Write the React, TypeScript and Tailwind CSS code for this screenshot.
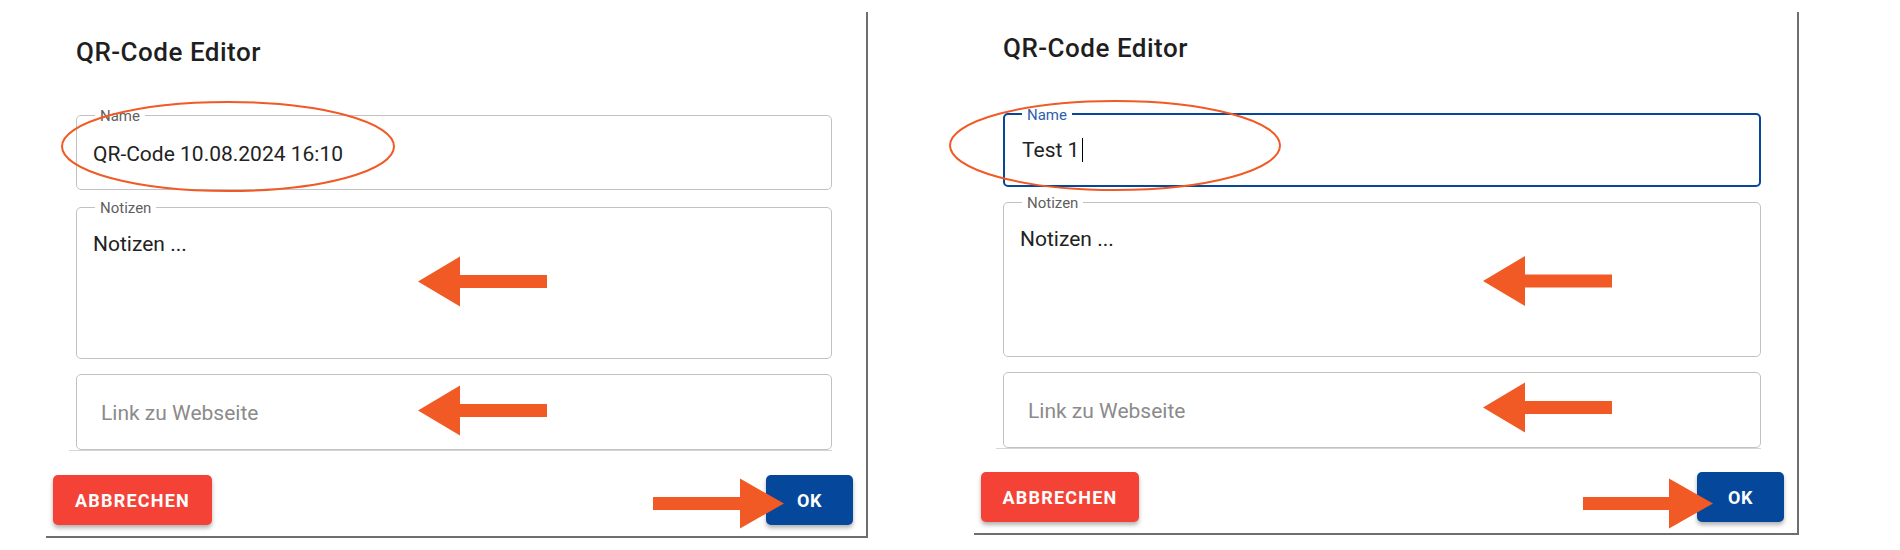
import type { ReactNode } from "react"

const ORANGE = "#f15a24"

type FieldProps = {
  label?: string
  focused?: boolean
  className: string
  children: ReactNode
}

// outlined text field, label sits in a notch on the top border
function Field({ label, focused, className, children }: FieldProps) {
  return (
    <div
      className={
        "relative rounded-[5px] bg-white " +
        (focused ? "border-2 border-[#06479c] " : "border border-[#c2c2c2] ") +
        className
      }
    >
      {label && (
        <span
          className={
            "absolute -top-[8px] bg-white px-[5px] text-[15px] leading-[16px] " +
            (focused ? "left-[17px] text-[#2d5fae]" : "left-[18px] text-[#5f5f5f]")
          }
        >
          {label}
        </span>
      )}
      {children}
    </div>
  )
}

type PanelProps = {
  right?: boolean
}

function EditorPanel({ right }: PanelProps) {
  return (
    <div
      className={
        "flex flex-col border-r-2 border-b-2 border-[#6e6e6e] bg-white " +
        (right ? "w-[825px] h-[523px]" : "w-[822px] h-[526px]")
      }
    >
      <div className={right ? "pl-[29px] pr-[36px] pt-[20px]" : "pl-[30px] pr-[34px] pt-[24px]"}>
        <h2 className="text-[26px] leading-[32px] font-medium tracking-[0.5px] text-[#1f1f1f]">QR-Code Editor</h2>

        {right ? (
          <Field label="Name" focused className="mt-[49px] h-[74px] pl-[17px] pt-[23px]">
            <div className="flex items-center text-[21px] leading-[24px] text-[#222]">
              Test 1
              <span className="ml-[3px] inline-block h-[24px] w-px bg-black" />
            </div>
          </Field>
        ) : (
          <Field label="Name" className="mt-[47px] h-[75px] pl-[16px] pt-[26px]">
            <div className="text-[21px] leading-[24px] text-[#222]">QR-Code 10.08.2024 16:10</div>
          </Field>
        )}

        <Field
          label="Notizen"
          className={(right ? "mt-[15px] h-[155px]" : "mt-[17px] h-[152px]") + " pl-[16px] pt-[24px]"}
        >
          <div className="text-[21px] leading-[24px] text-[#222]">Notizen ...</div>
        </Field>

        <Field className="mt-[15px] h-[76px] pl-[24px] pt-[26px]">
          <div className="text-[21px] leading-[24px] text-[#8b8b8b]">Link zu Webseite</div>
        </Field>
        <div className="-ml-[7px] h-px bg-[#d6d6d6]" />
      </div>

      <div className={"flex items-start justify-between pl-[7px] pr-[13px] " + (right ? "mt-[23px]" : "mt-[24px]")}>
        <button
          className={
            "flex h-[50px] items-center justify-center rounded-[5px] bg-[#f44336] text-[18px] font-bold tracking-[1.2px] text-white shadow-[0_3px_4px_rgba(0,0,0,0.3)] " +
            (right ? "w-[158px]" : "w-[159px]")
          }
        >
          ABBRECHEN
        </button>
        <button className="flex h-[50px] w-[87px] items-center justify-center rounded-[5px] bg-[#04479b] text-[18px] font-bold tracking-[0.6px] text-white shadow-[0_3px_4px_rgba(0,0,0,0.3)]">
          OK
        </button>
      </div>
    </div>
  )
}

// left-pointing block arrow: tip x, center y
function leftArrow(tip: number, cy: number) {
  const base = tip + 42
  const tail = tip + 129
  return `${tip},${cy} ${base},${cy - 25} ${base},${cy - 6.5} ${tail},${cy - 6.5} ${tail},${cy + 6.5} ${base},${cy + 6.5} ${base},${cy + 25}`
}

function rightArrow(tail: number, base: number, tip: number, cy: number) {
  return `${tail},${cy - 6.5} ${base},${cy - 6.5} ${base},${cy - 25} ${tip},${cy} ${base},${cy + 25} ${base},${cy + 6.5} ${tail},${cy + 6.5}`
}

export default function App() {
  return (
    <div
      className="relative h-[550px] w-[1900px] overflow-hidden bg-white"
      style={{ fontFamily: "Roboto, 'Liberation Sans', sans-serif" }}
    >
      <div className="flex pl-[46px] pt-[12px]">
        <EditorPanel />
        <div className="ml-[106px]">
          <EditorPanel right />
        </div>
      </div>

      {/* annotations drawn over the screenshots */}
      <svg className="pointer-events-none absolute left-0 top-0" width="1900" height="550" viewBox="0 0 1900 550">
        <ellipse cx="228" cy="146.5" rx="166" ry="44.5" fill="none" stroke={ORANGE} strokeWidth="2" />
        <ellipse cx="1115" cy="145.5" rx="165" ry="44.5" fill="none" stroke={ORANGE} strokeWidth="2" />
        <polygon points={leftArrow(418, 281.5)} fill={ORANGE} />
        <polygon points={leftArrow(418, 410.5)} fill={ORANGE} />
        <polygon points={leftArrow(1483, 281)} fill={ORANGE} />
        <polygon points={leftArrow(1483, 407.5)} fill={ORANGE} />
        <polygon points={rightArrow(653, 740, 784, 503.5)} fill={ORANGE} />
        <polygon points={rightArrow(1583, 1669, 1713, 503.5)} fill={ORANGE} />
      </svg>
    </div>
  )
}
